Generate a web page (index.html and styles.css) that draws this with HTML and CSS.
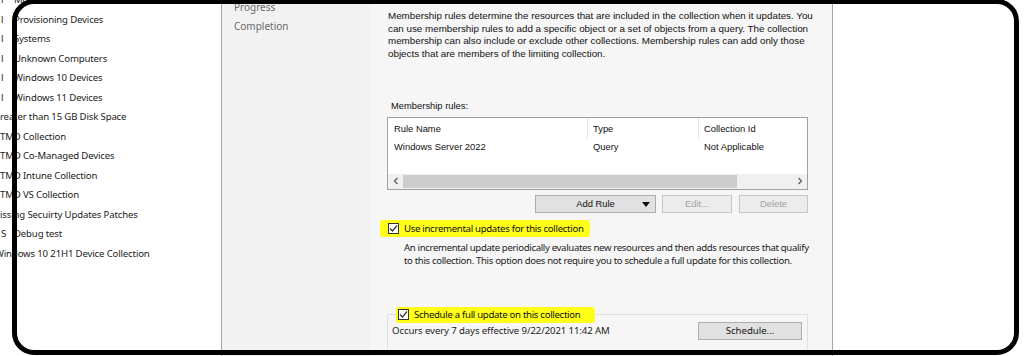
FILE: index.html
```html
<!DOCTYPE html>
<html lang="en">
<head>
  <meta charset="UTF-8">
  <title>Create Device Collection Wizard</title>
  <link rel="stylesheet" href="styles.css">
</head>
<body>

  <div class="screen">

    <!-- console tree, scrolled to the right -->
    <div class="tree">
      <ul class="tree-list">
        <li><span class="pre">l</span>Mobile Devices</li>
        <li><span class="pre">l</span>Provisioning Devices</li>
        <li><span class="pre">l</span>Systems</li>
        <li><span class="pre">l</span>Unknown Computers</li>
        <li><span class="pre">l</span>Windows 10 Devices</li>
        <li><span class="pre">l</span>Windows 11 Devices</li>
        <li>reater than 15 GB Disk Space</li>
        <li>TMD Collection</li>
        <li>TMD Co-Managed Devices</li>
        <li>TMD Intune Collection</li>
        <li>TMD VS Collection</li>
        <li>issing Secuirty Updates Patches</li>
        <li><span class="pre">S</span>Debug test</li>
        <li class="cut">Windows 10 21H1 Device Collection</li>
      </ul>
    </div>

    <!-- wizard steps -->
    <div class="wizard-nav">
      <div class="step">Progress</div>
      <div class="step">Completion</div>
    </div>

    <!-- wizard page -->
    <div class="wizard-page">
      <p class="intro">
        Membership rules determine the resources that are included in the collection when it updates. You<br>
        can use membership rules to add a specific object or a set of objects from a query. The collection<br>
        membership can also include or exclude other collections. Membership rules can add only those<br>
        objects that are members of the limiting collection.
      </p>

      <div class="field-label">Membership rules:</div>

      <div class="listview">
        <div class="lv-head">
          <span class="col col-name">Rule Name</span>
          <span class="col col-type">Type</span>
          <span class="col col-id">Collection Id</span>
        </div>
        <div class="lv-row">
          <span class="col col-name">Windows Server 2022</span>
          <span class="col col-type">Query</span>
          <span class="col col-id">Not Applicable</span>
        </div>
        <div class="lv-scroll">
          <span class="arrow">
            <svg width="6" height="8" viewBox="0 0 6 8"><path d="M4.5 1 L1.5 4 L4.5 7" fill="none" stroke="#606060" stroke-width="1.3"/></svg>
          </span>
          <span class="thumb"></span>
          <span class="track"></span>
          <span class="arrow">
            <svg width="6" height="8" viewBox="0 0 6 8"><path d="M1.5 1 L4.5 4 L1.5 7" fill="none" stroke="#606060" stroke-width="1.3"/></svg>
          </span>
        </div>
      </div>

      <div class="btn-row">
        <button class="btn btn-add">Add Rule <span class="caret"></span></button>
        <button class="btn btn-edit" disabled>Edit...</button>
        <button class="btn btn-delete" disabled>Delete</button>
      </div>

      <label class="check hl hl-first">
        <span class="box">
          <svg width="9" height="9" viewBox="0 0 9 9"><path d="M1 4.5 L3.5 7 L8 1.5" fill="none" stroke="#333" stroke-width="1.2"/></svg>
        </span>
        Use incremental updates for this collection
      </label>

      <p class="help">
        An incremental update periodically evaluates new resources and then adds resources that qualify<br>
        to this collection. This option does not require you to schedule a full update for this collection.
      </p>

      <fieldset class="group">
        <legend>
          <label class="check hl hl-second">
            <span class="box">
              <svg width="9" height="9" viewBox="0 0 9 9"><path d="M1 4.5 L3.5 7 L8 1.5" fill="none" stroke="#333" stroke-width="1.2"/></svg>
            </span>
            Schedule a full update on this collection
          </label>
        </legend>
        <div class="sched-row">
          <span>Occurs every 7 days effective 9/22/2021 11:42 AM</span>
          <button class="btn btn-schedule">Schedule...</button>
        </div>
      </fieldset>
    </div>

    <div class="side"></div>
  </div>

  <!-- annotation frame drawn over the screenshot -->
  <div class="frame"></div>

</body>
</html>
```

FILE: styles.css
```css
body {
  margin: 0;
  width: 1024px;
  height: 356px;
  overflow: hidden;
  background: #fff;
  position: relative;
}

.screen {
  display: flex;
  height: 356px;
}

/* console tree */
.tree {
  width: 221px;
  border-right: 1px solid #a6a6a6;
  background: #fff;
  overflow: hidden;
  font-family: "Noto Sans", sans-serif;
  font-size: 9.6px;
  letter-spacing: -0.15px;
  color: #222;
}

.tree-list {
  list-style: none;
  margin: -10px 0 0 0;
  padding: 0;
}

.tree-list li {
  height: 19.5px;
  line-height: 19.5px;
  white-space: nowrap;
}

.tree-list .pre {
  display: inline-block;
  width: 13px;
  padding-left: 1px;
}

.tree-list .cut {
  margin-left: -5px;
}

/* wizard steps */
.wizard-nav {
  width: 148px;
  background: #f2f2f2;
  padding: 0 0 0 12px;
  box-sizing: border-box;
  font-family: "Noto Sans", sans-serif;
  font-size: 10px;
  color: #6b6b6b;
}

.step {
  height: 19px;
  line-height: 19px;
}

.step:first-child {
  margin-top: -2.5px;
}

/* wizard page */
.wizard-page {
  width: 462px;
  background: #f6f6f6;
  padding: 10px 24px 0 17px;
  box-sizing: border-box;
  font-family: "Liberation Sans", Arial, sans-serif;
  font-size: 9.4px;
  color: #111;
}

.intro {
  margin: 0;
  padding-left: 1px;
  font-size: 9.8px;
  line-height: 12.7px;
  white-space: nowrap;
}

.field-label {
  margin-top: 39px;
  padding-left: 4px;
  line-height: 12px;
}

.listview {
  margin-top: 5px;
  height: 73px;
  box-sizing: border-box;
  border: 1px solid #a0a0a0;
  background: #fff;
  display: flex;
  flex-direction: column;
}

.lv-head,
.lv-row {
  display: flex;
}

.lv-head {
  height: 21px;
  line-height: 21px;
}

.lv-row {
  height: 16px;
  line-height: 16px;
}

.col {
  padding-left: 6px;
  box-sizing: border-box;
  white-space: nowrap;
}

.col-name { width: 199px; }
.col-type { width: 111px; }
.col-id { flex: 1; }

.lv-head .col-type,
.lv-head .col-id {
  border-left: 1px solid #e5e5e5;
  padding-left: 5px;
}

.lv-scroll {
  margin-top: auto;
  height: 15px;
  display: flex;
  background: #f0f0f0;
}

.lv-scroll .arrow {
  width: 15px;
  display: flex;
  align-items: center;
  justify-content: center;
}

.lv-scroll .thumb {
  width: 334px;
  margin: 1px 0;
  background: #cdcdcd;
}

.lv-scroll .track {
  flex: 1;
}

.btn-row {
  margin-top: 5px;
  display: flex;
  justify-content: flex-end;
  gap: 6px;
}

.btn {
  height: 18px;
  border: 1px solid #adadad;
  background: #e1e1e1;
  font-family: "Liberation Sans", Arial, sans-serif;
  font-size: 9.4px;
  color: #111;
  padding: 0;
}

.btn:disabled {
  border-color: #c8c8c8;
  background: #ececec;
  color: #a3a3a3;
}

.btn-add {
  width: 121px;
  position: relative;
}

.caret {
  position: absolute;
  right: 5px;
  top: 6px;
  border-left: 4px solid transparent;
  border-right: 4px solid transparent;
  border-top: 5px solid #111;
}

.btn-edit { width: 70px; }
.btn-delete { width: 69px; margin-left: 1px; }

/* highlighted checkboxes */
.check {
  display: flex;
  align-items: center;
  gap: 5px;
  font-family: "Noto Sans", sans-serif;
  font-size: 9.6px;
  letter-spacing: -0.3px;
  color: #111;
  white-space: nowrap;
}

.hl {
  background: #ffff1a;
  border-radius: 3px;
}

.box {
  width: 11px;
  height: 11px;
  box-sizing: border-box;
  border: 1px solid #333;
  background: #fff;
  display: flex;
  align-items: center;
  justify-content: center;
}

.hl-first {
  margin: 7px 0 0 -7px;
  width: 210px;
  height: 17px;
  box-sizing: border-box;
  padding-left: 8px;
}

.help {
  margin: 4px 0 0 0;
  padding-left: 17px;
  font-family: "Noto Sans", sans-serif;
  font-size: 9.6px;
  letter-spacing: -0.34px;
  line-height: 13px;
  color: #222;
  white-space: nowrap;
}

.group {
  margin: 40px 0 0 0;
  padding: 0 5px 14px 4px;
  border: 1px solid #e0e0e0;
  font-family: "Noto Sans", sans-serif;
  font-size: 9.6px;
  letter-spacing: -0.1px;
  color: #222;
}

.group legend {
  padding: 0;
  margin-left: 4px;
}

.hl-second {
  width: 199px;
  height: 16px;
  box-sizing: border-box;
  padding-left: 2px;
}

.sched-row {
  display: flex;
  align-items: center;
  justify-content: space-between;
  margin-top: -1px;
}

.btn-schedule {
  width: 104px;
  font-family: "Noto Sans", sans-serif;
  font-size: 9.6px;
}

.side {
  flex: 1;
  border-left: 1px solid #a6a6a6;
  background: #fff;
}

/* black rounded annotation frame */
.frame {
  position: absolute;
  left: 12px;
  top: -1px;
  width: 1007px;
  height: 356px;
  box-sizing: border-box;
  border: 5px solid #000;
  border-radius: 22px;
  pointer-events: none;
}
```
